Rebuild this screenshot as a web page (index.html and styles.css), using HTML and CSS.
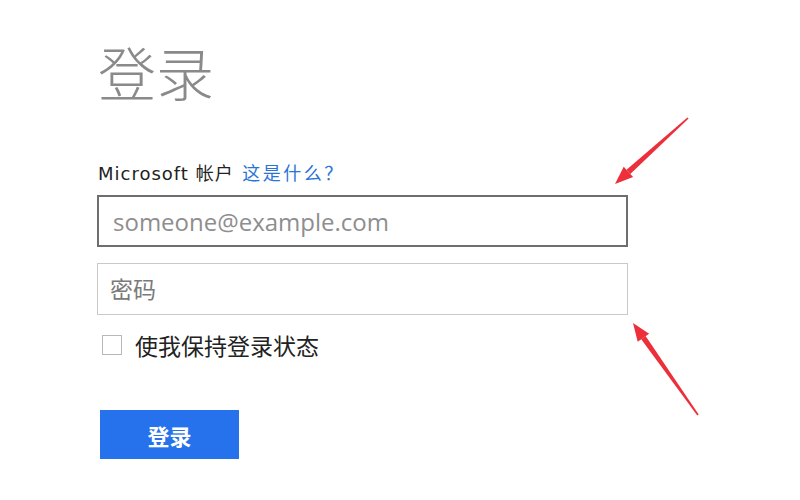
FILE: index.html
```html
<!DOCTYPE html>
<html lang="zh-CN">
<head>
<meta charset="utf-8">
<title>登录</title>
<link rel="stylesheet" href="styles.css">
</head>
<body>
<main class="page">
  <h1 class="title">登录</h1>
  <div class="label">Microsoft 帐户 <a class="link" href="#">这是什么？</a></div>
  <input class="field field-active" type="text" placeholder="someone@example.com">
  <input class="field field-pwd" type="password" placeholder="密码">
  <label class="remember"><span class="box"></span><span class="remember-text">使我保持登录状态</span></label>
  <button class="btn" type="button">登录</button>
</main>
<svg class="arrows" width="800" height="500" viewBox="0 0 800 500">
  <polygon fill="#ec2f3a" points="688.6,118.6 687.4,117.4 626.5,169.8 630.3,174.0"/>
  <polygon fill="#ec2f3a" points="615,184 633.1,177.1 623.7,166.7"/>
  <polygon fill="#ec2f3a" points="698.7,414.5 697.3,415.5 641.2,339.3 645.6,336.1"/>
  <polygon fill="#ec2f3a" points="633,323 649.1,333.7 637.7,341.7"/>
</svg>
</body>
</html>
```
FILE: styles.css
```css
html, body {
  margin: 0;
  padding: 0;
  background: #ffffff;
}
body {
  width: 800px;
  height: 500px;
  overflow: hidden;
  position: relative;
  font-family: "Liberation Sans", "Noto Sans CJK SC", sans-serif;
}
.page {
  display: flex;
  flex-direction: column;
  align-items: flex-start;
  padding: 32px 0 0 98px;
  width: 531px;
}
.title {
  margin: 0;
  font-family: "Noto Sans CJK SC", sans-serif;
  font-weight: 300;
  font-size: 58px;
  line-height: 78px;
  color: #8a8a8a;
}
.label {
  margin-top: 52px;
  font-family: "DejaVu Sans", "Noto Sans CJK SC", sans-serif;
  font-size: 18px;
  letter-spacing: 1px;
  line-height: 24px;
  color: #222;
}
.link {
  margin-left: 2px;
  color: #2a74d6;
  text-decoration: none;
  letter-spacing: 2.5px;
}
.field {
  box-sizing: border-box;
  width: 531px;
  height: 52px;
  margin: 0 0 0 -1px;
  padding: 0 0 0 14px;
  border: 1px solid #c9c9c9;
  background: #fff;
  font-family: "Open Sans", "Noto Sans CJK SC", sans-serif;
  font-size: 24px;
  color: #333;
  outline: none;
}
.field-active {
  margin-top: 9px;
  border: 2px solid #6e6e6e;
}
.field::placeholder {
  color: #8e8e8e;
}
.field-pwd {
  margin-top: 16px;
  padding-left: 12px;
  font-size: 23px;
}
.field-pwd::placeholder {
  color: #7a7a7a;
  font-family: "Noto Sans CJK SC", sans-serif;
}
.remember {
  display: flex;
  align-items: center;
  margin-top: 18px;
  margin-left: 4px;
  height: 24px;
}
.box {
  box-sizing: border-box;
  width: 20px;
  height: 20px;
  border: 1px solid #b8b8b8;
  background: #fff;
}
.remember-text {
  margin-left: 13px;
  font-family: "Noto Sans CJK SC", sans-serif;
  font-size: 23px;
  line-height: 24px;
  color: #222;
}
.btn {
  margin-top: 53px;
  margin-left: 2px;
  width: 139px;
  height: 49px;
  border: none;
  background: #2672ec;
  color: #fff;
  font-family: "Noto Sans CJK SC", sans-serif;
  font-weight: 700;
  font-size: 22px;
  padding: 0;
}
.arrows {
  position: absolute;
  left: 0;
  top: 0;
  pointer-events: none;
}
```
